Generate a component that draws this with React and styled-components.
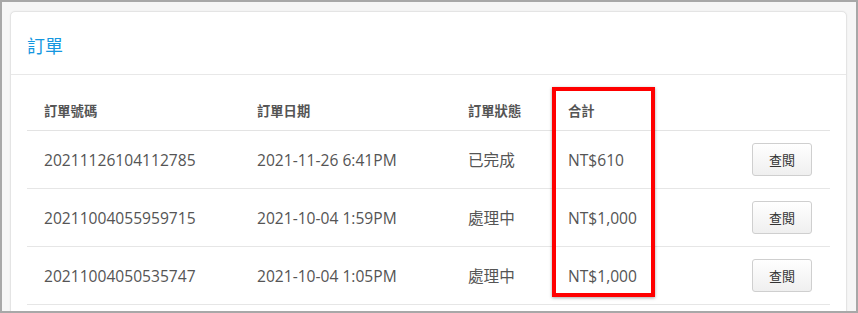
import React from 'react'
import styled, { createGlobalStyle } from 'styled-components'

const orders = [
    { id: '20211126104112785', date: '2021-11-26 6:41PM', status: '已完成', total: 'NT$610' },
    { id: '20211004055959715', date: '2021-10-04 1:59PM', status: '處理中', total: 'NT$1,000' },
    { id: '20211004050535747', date: '2021-10-04 1:05PM', status: '處理中', total: 'NT$1,000' },
]

function App() {
    return (
        <Frame>
            <GlobalStyle />
            <Card>
                <CardHeader>
                    <Title>訂單</Title>
                </CardHeader>
                <CardBody>
                    <HeadRow>
                        <Th>訂單號碼</Th>
                        <Th>訂單日期</Th>
                        <Th>訂單狀態</Th>
                        <Th>合計</Th>
                        <Th />
                    </HeadRow>
                    {orders.map(o => (
                        <Row key={o.id}>
                            <Td>{o.id}</Td>
                            <Td>{o.date}</Td>
                            <Td>{o.status}</Td>
                            <Td>{o.total}</Td>
                            <Action>
                                <ViewButton>查閱</ViewButton>
                            </Action>
                        </Row>
                    ))}
                </CardBody>
            </Card>
            <Highlight />
        </Frame>
    )
}

export default App

const GlobalStyle = createGlobalStyle`
body {
    margin: 0;
    font-family: "Open Sans", "Noto Sans CJK TC", sans-serif;
}
`

const Frame = styled.div`
position: relative;
box-sizing: border-box;
width: 858px;
height: 313px;
overflow: hidden;
border: 2px solid #a8a8a8;
background: #f6f6f6;
padding: 9px 9px 0 8px;
`

const Card = styled.div`
background: #fff;
border: 1px solid #e4e4e4;
border-radius: 5px;
box-shadow: 0 0 2px rgba(0, 0, 0, 0.06);
height: 340px;
`

const CardHeader = styled.div`
padding: 25px 16px 19px;
border-bottom: 1px solid #e8e8e8;
`

const Title = styled.div`
color: #1597e0;
font-size: 18px;
line-height: 18px;
`

const CardBody = styled.div`
padding: 16px 16px 0;
`

// shared column layout for header and rows
const grid = `
display: grid;
grid-template-columns: 213px 211px 100px 1fr 120px;
align-items: center;
`

const HeadRow = styled.div`
${grid}
height: 40px;
box-sizing: border-box;
border-bottom: 1px solid #e3e3e3;
`

const Row = styled.div`
${grid}
height: 58px;
box-sizing: border-box;
border-bottom: 1px solid #e6e6e6;
`

const Th = styled.div`
padding-left: 17px;
font-size: 13.3px;
font-weight: 700;
color: #555;
`

const Td = styled.div`
padding-left: 17px;
font-size: 15.6px;
color: #555;
white-space: nowrap;
`

const Action = styled.div`
display: flex;
justify-content: flex-end;
padding-right: 18px;
`

const ViewButton = styled.button`
width: 60px;
height: 33px;
border: 1px solid #cfcfcf;
border-radius: 3px;
background: linear-gradient(#ffffff, #efefef);
color: #333;
font-family: "Noto Sans CJK TC", sans-serif;
font-size: 13px;
padding: 0;
`

const Highlight = styled.div`
position: absolute;
left: 550px;
top: 85px;
width: 103px;
height: 210px;
box-sizing: border-box;
border: 4px solid #ff0000;
box-shadow: 0 1px 3px rgba(0, 0, 0, 0.35);
`
